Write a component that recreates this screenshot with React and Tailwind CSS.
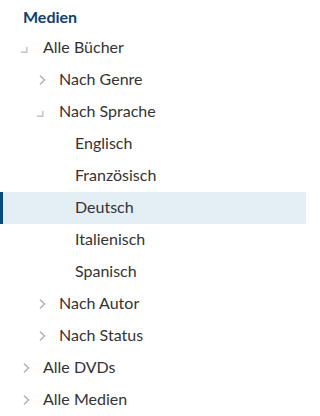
import React from "react";

const Chevron = () => (
  <svg width="16" height="16" viewBox="0 0 16 16" fill="none">
    <path d="M6.5 4 L10.5 8 L6.5 12" stroke="#b3b3b3" strokeWidth="1.5" strokeLinecap="square" />
  </svg>
);

const Corner = () => (
  <svg width="16" height="16" viewBox="0 0 16 16" fill="none">
    <path d="M3 12.25 H8.75 V7" stroke="#c4c4c4" strokeWidth="1.5" />
  </svg>
);

const items = [
  { label: "Alle Bücher", level: 0, icon: "open" },
  { label: "Nach Genre", level: 1, icon: "closed" },
  { label: "Nach Sprache", level: 1, icon: "open" },
  { label: "Englisch", level: 2 },
  { label: "Französisch", level: 2 },
  { label: "Deutsch", level: 2, selected: true },
  { label: "Italienisch", level: 2 },
  { label: "Spanisch", level: 2 },
  { label: "Nach Autor", level: 1, icon: "closed" },
  { label: "Nach Status", level: 1, icon: "closed" },
  { label: "Alle DVDs", level: 0, icon: "closed" },
  { label: "Alle Medien", level: 0, icon: "closed" },
];

const padClass = ["pl-[18px]", "pl-[34px]", "pl-[50px]"];

export default function App() {
  return (
    <div
      className="w-[306px] bg-white text-[#333333]"
      style={{ fontFamily: "Lato, 'Noto Sans', sans-serif" }}
    >
      <div className="h-8 pl-[23px] pt-[7px] text-[16px] leading-[20px] font-bold text-[#0e3f70]">
        Medien
      </div>
      <ul>
        {items.map((it) => (
          <li
            key={it.label}
            className={
              "relative flex h-8 items-center text-[16px] leading-[20px] " +
              padClass[it.level] +
              (it.selected ? " bg-[#e3eef5]" : "")
            }
          >
            {it.selected && (
              <span className="absolute left-0 top-0 h-full w-[3px] bg-[#0b4a80]" />
            )}
            <span className="flex h-4 w-4 shrink-0 items-center justify-center">
              {it.icon === "closed" && <Chevron />}
              {it.icon === "open" && <Corner />}
            </span>
            <span className="ml-[9px] pb-[2px]">{it.label}</span>
          </li>
        ))}
      </ul>
    </div>
  );
}
